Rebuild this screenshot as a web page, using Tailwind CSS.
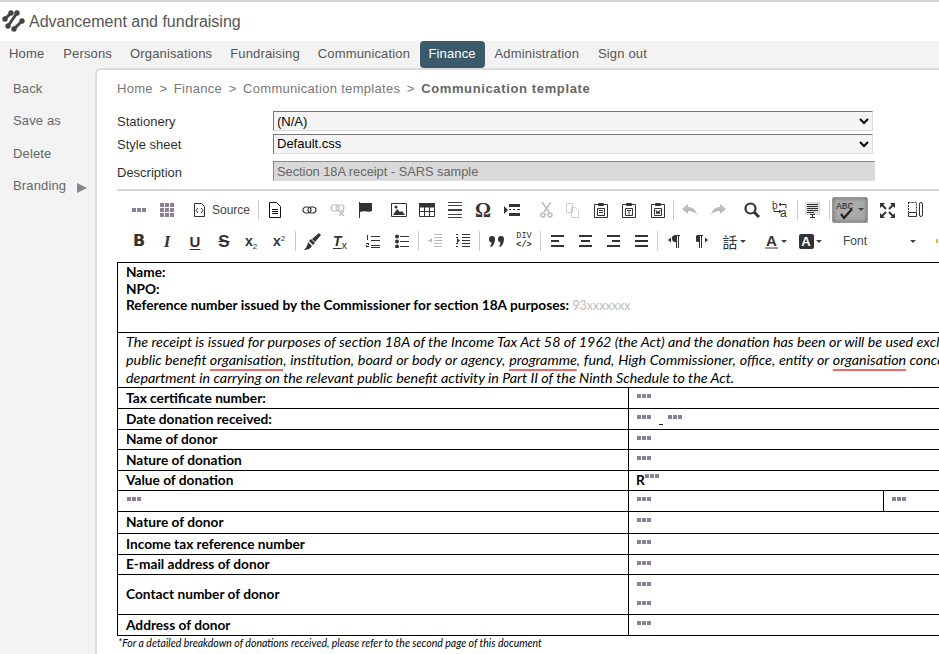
<!DOCTYPE html>
<html><head><meta charset="utf-8"><title>Communication template</title>
<script src="https://cdn.jsdelivr.net/npm/@tailwindcss/browser@4"></script></head>
<body class="overflow-hidden bg-white">
<div class="w-[939px] h-[654px] overflow-hidden font-['Liberation_Sans',Arial,sans-serif] text-[13px] flex flex-col border-t-2 border-[#d2d2d2]">
  <header class="h-[39px] shrink-0 flex items-center pl-[2px] bg-white">
    <svg width="23" height="23" viewBox="0 0 23 23" fill="#444" stroke="#444" stroke-width="3" stroke-linecap="round"><path d="M3 9L9 3M6 16L15 3M12 19L20 11"/><g stroke="none"><circle cx="3" cy="9" r="2.700"/><circle cx="9" cy="3" r="2.700"/><circle cx="6" cy="16" r="2.700"/><circle cx="15" cy="3" r="2.700"/><circle cx="12" cy="19" r="2.700"/><circle cx="20" cy="11" r="2.700"/></g></svg>
    <span class="ml-[4px] text-[16px] text-[#555]">Advancement and fundraising</span>
  </header>
  <nav class="h-[27px] shrink-0 bg-[#f3f3f3] flex text-[#555] tracking-[0.15px]">
    <a class="pl-[9px] pr-[9.500px] leading-[25px]">Home</a>
    <a class="pl-[9.500px] pr-[8.500px] leading-[25px]">Persons</a>
    <a class="pl-[9.500px] pr-[8.500px] leading-[25px]">Organisations</a>
    <a class="pl-[9.500px] pr-[8.500px] leading-[25px]">Fundraising</a>
    <a class="px-[9.500px] leading-[25px]">Communication</a>
    <a class="w-[65px] h-[27px] text-center leading-[25px] bg-[#3a5a6c] text-white rounded-[4px]">Finance</a>
    <a class="px-[10px] leading-[25px]">Administration</a>
    <a class="px-[9px] leading-[25px]">Sign out</a>
  </nav>
  <div class="flex flex-1 min-h-0 bg-[#f3f3f3]">
    <aside class="w-[95px] shrink-0 pl-[13px] pt-[13px] text-[#666] tracking-[0.15px] flex flex-col gap-[16px]">
      <div class="leading-[16px]">Back</div>
      <div class="leading-[16px]">Save as</div>
      <div class="leading-[17px]">Delete</div>
      <div class="leading-[16px] flex items-center">Branding<svg class="ml-[11px] mt-[4px]" width="10" height="10" viewBox="0 0 10 10"><path d="M0 0l10 5-10 5z" fill="#888"/></svg></div>
    </aside>
    <main class="flex-1 min-w-0 bg-white border-l-2 border-t-2 border-[#dcdcdc] rounded-tl-[6px] overflow-hidden pl-[20px]">
      <div class="h-[38px] pt-[11px] leading-[16px] text-[#777] tracking-[0.3px] whitespace-nowrap">Home<span class="mx-[6.500px]">&gt;</span>Finance<span class="mx-[6.500px]">&gt;</span>Communication templates<span class="mx-[6.500px]">&gt;</span><b class="text-[#666] tracking-[0.63px]">Communication template</b></div>
      <div class="flex items-center h-[22px] mt-[2px] text-black/85"><label class="w-[156px] pt-[2px]">Stationery</label>
        <select class="w-[600px] h-[20px] text-[13px] bg-[#f4f4f4] border border-[#767676] border-b-[#ddd] border-r-[#ddd] pl-0 [text-indent:-1px] [appearance:auto] text-black"><option>(N/A)</option></select></div>
      <div class="flex items-center h-[23px] text-black/85"><label class="w-[156px] pt-[3px]">Style sheet</label>
        <select class="w-[600px] h-[20px] text-[13px] bg-[#f4f4f4] border border-[#767676] border-b-[#ddd] border-r-[#ddd] pl-0 [text-indent:-1px] [appearance:auto] text-black"><option>Default.css</option></select></div>
      <div class="flex items-center h-[31px] text-black/85"><label class="w-[156px] pt-[4px]">Description</label>
        <input class="w-[602px] h-[20px] bg-[#d9d9d9] border border-[#8a8a8a] border-b-[#ddd] border-r-[#ddd] px-[3px] text-[12.800px] text-[#666] mt-[1px]" value="Section 18A receipt - SARS sample" disabled></div>
      <div class="border-t-2 border-[#d4d4d4] mt-[3px] h-[73px] flex flex-col whitespace-nowrap">
        <div class="flex items-center h-[34px] pt-[4px] pl-[8px] text-[#333]">
          <span class="w-[28px] flex justify-center"><svg width="14" height="4"><path d="M0 0h4v4H0zM5 0h4v4H5zM10 0h4v4h-4z" fill="#8c7f96"/></svg></span>
          <span class="w-[28px] flex justify-center"><svg width="14" height="14"><path d="M0 0h4v4H0zM5 0h4v4H5zM10 0h4v4h-4zM0 5h4v4H0zM5 5h4v4H5zM10 5h4v4h-4zM0 10h4v4H0zM5 10h4v4H5zM10 10h4v4h-4z" fill="#8c7f96"/></svg></span>
          <span class="w-[78px] flex items-center pl-[12px] text-[12px] text-[#444] border-r border-[#ccc] h-[20px]"><svg class="mr-[6px]" width="13" height="16" fill="none" stroke="#333"><path d="M1.500 1.500h7l3 3v10h-10zM5 6L3 8.500l2 2.500M8 6l2 2.500-2 2.500"/></svg>Source</span>
          <span class="w-[28px] ml-[2px] flex justify-center"><svg width="12" height="16" fill="none" stroke="#111"><path d="M.5.500h7l4 4v11H.5zM3 7.500h6M3 9.500h6M3 11.500h6"/></svg></span>
          <span class="w-[28px] ml-[6px] flex justify-center"><svg width="15" height="8" fill="none" stroke="#333" stroke-width="1.200"><rect x="1" y="1" width="8" height="6" rx="3"/><rect x="6" y="1" width="8" height="6" rx="3"/></svg></span>
          <span class="w-[28px] flex justify-center"><svg width="15" height="12" fill="none" stroke="#bbb" stroke-width="1.200"><rect x="1" y="1" width="8" height="6" rx="3"/><rect x="6" y="1" width="8" height="6" rx="3"/><path d="M9 7l5 5M14 7l-5 5"/></svg></span>
          <span class="w-[28px] flex justify-center"><svg width="14" height="16"><path d="M1 0h1v16H1zM2 1h12v8c-4 2-7-1-12 1z" fill="#333"/></svg></span>
          <span class="w-[28px] ml-[6px] flex justify-center"><svg width="16" height="14"><path d="M.5.500h15v13H.5z" fill="none" stroke="#333"/><path d="M2 12l4-6 3 3 2-1 3 4z" fill="#333"/><circle cx="5" cy="4" r="1.500" fill="#333"/></svg></span>
          <span class="w-[28px] flex justify-center"><svg width="16" height="14"><path d="M.5.500h15v13H.5z" fill="#fff" stroke="#333"/><path d="M0 0h16v4H0zM5.500 4v9M10.500 4v9M0 8.500h16" fill="#333" stroke="#333"/></svg></span>
          <span class="w-[28px] flex justify-center"><svg width="14" height="16"><path d="M0 0h14v1H0zM0 3h14v1H0zM0 7h14v2H0zM0 12h14v1H0zM0 15h14v1H0z" fill="#444"/></svg></span>
          <span class="w-[28px] flex justify-center text-[20px] font-bold text-[#333] leading-none font-['Liberation_Serif',serif]">Ω</span>
          <span class="w-[28px] ml-[1px] flex justify-center"><svg width="16" height="12"><path d="M0 2l4 4-4 4zM5 0h11v3H5zM5 5h2v1H5zM9 5h2v1H9zM13 5h3v1h-3zM5 9h11v3H5z" fill="#333"/></svg></span>
          <span class="w-[28px] ml-[6px] flex justify-center"><svg width="13" height="16" fill="none" stroke="#bbb" stroke-width="1.500"><path d="M2 0l7 10M11 0L4 10"/><circle cx="3" cy="13" r="2"/><circle cx="10" cy="13" r="2"/></svg></span>
          <span class="w-[28px] ml-[-2px] flex justify-center"><svg width="13" height="15" fill="none" stroke="#ccc"><path d="M.5.500h6v9h-6zM5.500 4.500h4l3 3v7h-7z" fill="#fff"/></svg></span>
          <span class="w-[28px] ml-[1px] flex justify-center"><svg width="14" height="16" fill="none" stroke="#333"><path d="M.5 2.500h13v13H.5zM4.500 1.500h5v2h-5zM3.500 6.500h7v7h-7zM5 8.500h4M5 10.500h4"/></svg></span>
          <span class="w-[28px] flex justify-center"><svg width="14" height="16" fill="none" stroke="#333"><path d="M.5 2.500h13v13H.5zM4.500 1.500h5v2h-5zM3.500 6.500h7v7h-7zM5 8.500h4M7 8.500v4"/></svg></span>
          <span class="w-[28px] ml-[1px] flex justify-center"><svg width="14" height="16" fill="none" stroke="#333"><path d="M.5 2.500h13v13H.5zM4.500 1.500h5v2h-5zM3.500 6.500h7v7h-7zM5 8l1 4 1-3 1 3 1-4"/></svg></span>
          <span class="w-[1px] h-[20px] bg-[#ccc] ml-[1px]"></span>
          <span class="w-[28px] ml-[2px] flex justify-center"><svg width="16" height="12"><path d="M6 0v3c5 0 8 3 9 8-2-3-5-4-9-4v3L0 5z" fill="#bbb"/></svg></span>
          <span class="w-[28px] flex justify-center"><svg width="16" height="12"><path d="M10 0v3C5 3 2 6 1 11c2-3 5-4 9-4v3l6-5z" fill="#bbb"/></svg></span>
          <span class="w-[28px] ml-[6px] flex justify-center"><svg width="16" height="16" fill="none" stroke="#333" stroke-width="2.200"><circle cx="6.500" cy="6.500" r="5"/><path d="M10 10l5 5" stroke-width="3"/></svg></span>
          <span class="w-[28px] flex justify-center"><svg width="16" height="18" fill="none" stroke="#333"><text x="0" y="8" font-size="10" font-family="Liberation Sans" fill="#333" stroke="none">b</text><text x="8" y="16" font-size="12" font-family="Liberation Sans" fill="#333" stroke="none">a</text><path d="M9 2l-2 1.500L9 5M7.500 3.500H14V7M7 12l2-1.500L7 9M8.500 10.500H2V8"/></svg></span>
          <span class="w-[1px] h-[20px] bg-[#ccc] ml-[3px]"></span>
          <span class="w-[28px] flex justify-center"><svg width="15" height="16"><path d="M0 0h15v13H0z" fill="#ddd"/><path d="M2 2h11v1H2zM2 4h11v1H2zM2 6h11v1H2zM2 8h11v1H2zM2 10h7v1H2zM5 12h5v1H5zM7 12h1v4H7zM5 15h5v1H5z" fill="#333"/></svg></span>
          <span class="w-[1px] h-[20px] bg-[#ccc] ml-[3px]"></span>
          <span class="w-[36px] h-[26px] ml-[2px] bg-[#aaa] rounded-[2px] border border-[#999] shadow-[inset_0_0_4px_#666] flex items-center justify-center text-[#222]"><svg width="30" height="20" fill="none"><text x="1" y="9" font-size="9.500" font-family="Liberation Mono" fill="#222">ABC</text><path d="M6 14l3 4 8-9" stroke="#222" stroke-width="2.200"/><path d="M23 8h6l-3 3z" fill="#444"/></svg></span>
          <span class="w-[28px] ml-[5px] flex justify-center"><svg width="15" height="15"><path d="M0 0h5L0 5zM15 0v5l-5-5zM0 15v-5l5 5zM15 15h-5l5-5z" fill="#333"/><path d="M2 2l4 4M13 2L9 6M2 13l4-4M13 13L9 9" stroke="#333" stroke-width="2"/></svg></span>
          <span class="w-[28px] flex justify-center"><svg width="15" height="16" fill="none" stroke="#333"><path d="M.5.500h8v9" stroke-dasharray="2 1"/><path d="M.5 0v10" stroke-dasharray="2 1"/><path d="M.5 10.500h8v4h-8z"/><rect x="11.500" y=".5" width="3" height="14" rx="1.500"/></svg></span>
        </div>
        <div class="flex items-center h-[30px] mt-[1px] pl-[8px] text-[#333]">
          <span class="w-[28px] text-center font-bold text-[16px] leading-none font-['DejaVu_Sans',sans-serif]">B</span>
          <span class="w-[28px] text-center font-bold italic text-[17px] leading-none font-['Liberation_Serif',serif]">I</span>
          <span class="w-[28px] text-center font-bold underline underline-offset-[2px] text-[15px] leading-none">U</span>
          <span class="w-[28px] ml-[1px] text-center font-bold line-through text-[17px] leading-none">S</span>
          <span class="w-[28px] ml-[-1px] text-center font-bold text-[14px] leading-none">x<span class="text-[8px] font-normal relative top-[3px]">2</span></span>
          <span class="w-[28px] text-center font-bold text-[14px] leading-none">x<span class="text-[8px] font-normal relative top-[-5px]">2</span></span>
          <span class="w-[1px] h-[20px] bg-[#ccc] ml-[2px]"></span>
          <span class="w-[28px] ml-[2px] flex justify-center"><svg width="17" height="17"><path d="M15 0l2 2-6 7-3-3zM7 6l4 4-2 2-4-4zM4 9l4 4c-2 3-5 4-8 4 2-2 4-5 4-8z" fill="#333"/></svg></span>
          <span class="w-[28px] text-center font-bold italic text-[14px] leading-none"><span class="underline underline-offset-[2px]">T</span><span class="text-[11px] not-italic font-normal relative top-[3px]">x</span></span>
          <span class="w-[28px] ml-[5px] flex justify-center"><svg width="14" height="14"><path d="M5 2h9v1H5zM5 6h9v1H5zM5 11h9v1H5zM5 13h9v1H5zM1 1h1v5H1zM0 9h3v1H0zM2 10h1v1H2zM0 12h3v1H0zM0 11h1v2H0z" fill="#333"/></svg></span>
          <span class="w-[28px] ml-[1px] flex justify-center"><svg width="14" height="14"><path d="M5 2h9v1H5zM5 7h9v1H5zM5 12h9v1H5z" fill="#333"/><circle cx="2" cy="2.500" r="2" fill="#333"/><circle cx="2" cy="7.500" r="2" fill="#333"/><circle cx="2" cy="12.500" r="2" fill="#333"/></svg></span>
          <span class="w-[1px] h-[20px] bg-[#ccc] ml-[2px]"></span>
          <span class="w-[28px] ml-[2px] flex justify-center"><svg width="14" height="14"><path d="M6 0h8v1H6zM6 3h8v1H6zM6 6h8v1H6zM6 9h8v1H6zM6 12h8v1H6zM4 4v5L1 6.500zM0 6h2v1H0z" fill="#bbb"/></svg></span>
          <span class="w-[28px] flex justify-center"><svg width="14" height="14"><path d="M6 0h8v1H6zM6 3h8v1H6zM6 6h8v1H6zM6 9h8v1H6zM6 12h8v1H6zM1 4v5l3-2.500zM0 0h2v1H0zM0 12h2v1H0zM0 3h2v1H0zM0 9h2v1H0z" fill="#333"/></svg></span>
          <span class="w-[1px] h-[20px] bg-[#ccc] ml-[2px]"></span>
          <span class="w-[28px] ml-[2px] flex justify-center"><svg width="15" height="11"><path d="M0 3a3 3 0 1 1 6 0c0 4-2 7-4 8l-1-1c1-1 1.500-2 1.500-3.500A3 3 0 0 1 0 3zM9 3a3 3 0 1 1 6 0c0 4-2 7-4 8l-1-1c1-1 1.500-2 1.500-3.500A3 3 0 0 1 9 3z" fill="#333"/></svg></span>
          <span class="w-[28px] flex flex-col items-center text-[8.500px] leading-[9px] font-['Liberation_Mono'] text-[#333]"><span>DIV</span><span class="font-bold">&lt;/&gt;</span></span>
          <span class="w-[1px] h-[20px] bg-[#ccc] ml-[2px]"></span>
          <span class="w-[28px] ml-[2px] flex justify-center"><svg width="13" height="12"><path d="M0 0h13v2H0zM0 5h8v2H0zM0 10h13v2H0z" fill="#333"/></svg></span>
          <span class="w-[28px] flex justify-center"><svg width="13" height="12"><path d="M0 0h13v2H0zM2 5h9v2H2zM0 10h13v2H0z" fill="#333"/></svg></span>
          <span class="w-[28px] flex justify-center"><svg width="13" height="12"><path d="M0 0h13v2H0zM5 5h8v2H5zM0 10h13v2H0z" fill="#333"/></svg></span>
          <span class="w-[28px] flex justify-center"><svg width="13" height="12"><path d="M0 0h13v2H0zM0 5h13v2H0zM0 10h13v2H0z" fill="#333"/></svg></span>
          <span class="w-[1px] h-[20px] bg-[#ccc] ml-[2px]"></span>
          <span class="w-[28px] ml-[2px] flex justify-center"><svg width="12" height="13"><path d="M0 5l3-2.500v5zM7 0h5v1h-1v12h-1V1H9v12H8V7A3.500 3.500 0 0 1 7 0z" fill="#333"/></svg></span>
          <span class="w-[28px] flex justify-center"><svg width="12" height="13"><path d="M12 5L9 2.500v5zM2 0h5v1H6v12H5V1H4v12H3V7A3.500 3.500 0 0 1 2 0z" fill="#333"/></svg></span>
          <span class="w-[28px] ml-[4px] flex items-center justify-center font-['Noto_Sans_CJK_TC',sans-serif] text-[15px] leading-none">話<svg class="ml-[2px]" width="6" height="3"><path d="M0 0h6L3 3z" fill="#444"/></svg></span>
          <span class="w-[28px] ml-[14px] flex items-center justify-center"><span class="font-bold text-[15px] leading-[13px] px-[1px] border-b-2 border-[#999]">A</span><svg class="ml-[3px]" width="6" height="3"><path d="M0 0h6L3 3z" fill="#444"/></svg></span>
          <span class="w-[28px] ml-[6px] flex items-center justify-center"><span class="w-[15px] h-[15px] bg-[#333] rounded-[2px] text-white font-bold text-[13px] leading-[15px] text-center">A</span><svg class="ml-[2px]" width="6" height="3"><path d="M0 0h6L3 3z" fill="#444"/></svg></span>
          <span class="ml-[19px] text-[12px] text-[#444]">Font</span>
          <svg class="ml-[43px]" width="6" height="3"><path d="M0 0h6L3 3z" fill="#444"/></svg>
          <span class="ml-[20px] w-[2px] h-[4px] bg-[#f5b041]"></span>
        </div>
      </div>
      <table class="ml-0 w-[1130px] table-fixed border-collapse border border-black text-black text-[13.700px] leading-[16.500px] font-['Lato',sans-serif] font-bold whitespace-nowrap">
        <colgroup><col class="w-[511px]"><col class="w-[255px]"><col></colgroup>
        <tbody>
          <tr class="h-[70px]"><td colspan="3" class="border border-black align-top pl-[8px] pt-[1px]">Name:<br>NPO:<br>Reference number issued by the Commissioner for section 18A purposes: <span class="font-normal text-[#bbb] text-[12.500px]">93xxxxxxx</span></td></tr>
          <tr class="h-[55px]"><td colspan="3" class="border border-black pl-[8px] font-normal italic text-[14.300px] leading-[18px]">The receipt is issued for purposes of section 18A of the Income Tax Act 58 of 1962 (the Act) and the donation has been or will be used exclusively<br>public benefit <span class="underline decoration-2 decoration-[#ee6a6a] underline-offset-[4px] [text-decoration-skip-ink:none]">organisation</span><span class="[word-spacing:0.500px]">, institution, board or body or agency, </span><span class="underline decoration-2 decoration-[#ee6a6a] underline-offset-[4px] [text-decoration-skip-ink:none]">programme</span><span class="[word-spacing:0.500px]">, fund, High Commissioner, office, entity or </span><span class="underline decoration-2 decoration-[#ee6a6a] underline-offset-[4px] [text-decoration-skip-ink:none]">organisation</span> concerned<br>department in carrying on the relevant public benefit activity in Part II of the Ninth Schedule to the Act.</td></tr>
          <tr class="h-[21px]"><td class="border border-black pl-[8px]">Tax certificate number:</td><td colspan="2" class="border border-black align-top pl-[8px] pt-[6px]"><svg class="block" width="14" height="4"><path d="M0 0h4v4H0zM5 0h4v4H5zM10 0h4v4h-4z" fill="#8c7f96"/></svg></td></tr>
          <tr class="h-[21px]"><td class="border border-black pl-[8px]">Date donation received:</td><td colspan="2" class="border border-black align-top pl-[8px] pt-[6px]"><span class="flex items-start"><svg class="block" width="14" height="4"><path d="M0 0h4v4H0zM5 0h4v4H5zM10 0h4v4h-4z" fill="#8c7f96"/></svg><span class="w-[4px] h-[1px] bg-[#222] ml-[8px] mt-[9px]"></span><svg class="block ml-[5px]" width="14" height="4"><path d="M0 0h4v4H0zM5 0h4v4H5zM10 0h4v4h-4z" fill="#8c7f96"/></svg></span></td></tr>
          <tr class="h-[20px]"><td class="border border-black pl-[8px]">Name of donor</td><td colspan="2" class="border border-black align-top pl-[8px] pt-[6px]"><svg class="block" width="14" height="4"><path d="M0 0h4v4H0zM5 0h4v4H5zM10 0h4v4h-4z" fill="#8c7f96"/></svg></td></tr>
          <tr class="h-[21px]"><td class="border border-black pl-[8px]">Nature of donation</td><td colspan="2" class="border border-black align-top pl-[8px] pt-[6px]"><svg class="block" width="14" height="4"><path d="M0 0h4v4H0zM5 0h4v4H5zM10 0h4v4h-4z" fill="#8c7f96"/></svg></td></tr>
          <tr class="h-[20px]"><td class="border border-black pl-[8px]">Value of donation</td><td colspan="2" class="border border-black pl-[7px]"><span class="flex items-start">R<svg class="block mt-[2px]" width="14" height="4"><path d="M0 0h4v4H0zM5 0h4v4H5zM10 0h4v4h-4z" fill="#8c7f96"/></svg></span></td></tr>
          <tr class="h-[21px]"><td class="border border-black align-top pl-[9px] pt-[6px]"><svg class="block" width="14" height="4"><path d="M0 0h4v4H0zM5 0h4v4H5zM10 0h4v4h-4z" fill="#8c7f96"/></svg></td><td class="border border-black align-top pl-[8px] pt-[6px]"><svg class="block" width="14" height="4"><path d="M0 0h4v4H0zM5 0h4v4H5zM10 0h4v4h-4z" fill="#8c7f96"/></svg></td><td class="border border-black align-top pl-[8px] pt-[6px]"><svg class="block" width="14" height="4"><path d="M0 0h4v4H0zM5 0h4v4H5zM10 0h4v4h-4z" fill="#8c7f96"/></svg></td></tr>
          <tr class="h-[22px]"><td class="border border-black pl-[8px]">Nature of donor</td><td colspan="2" class="border border-black align-top pl-[8px] pt-[6px]"><svg class="block" width="14" height="4"><path d="M0 0h4v4H0zM5 0h4v4H5zM10 0h4v4h-4z" fill="#8c7f96"/></svg></td></tr>
          <tr class="h-[21px]"><td class="border border-black pl-[8px]">Income tax reference number</td><td colspan="2" class="border border-black align-top pl-[8px] pt-[6px]"><svg class="block" width="14" height="4"><path d="M0 0h4v4H0zM5 0h4v4H5zM10 0h4v4h-4z" fill="#8c7f96"/></svg></td></tr>
          <tr class="h-[20px]"><td class="border border-black pl-[8px]">E-mail address of donor</td><td colspan="2" class="border border-black align-top pl-[8px] pt-[6px]"><svg class="block" width="14" height="4"><path d="M0 0h4v4H0zM5 0h4v4H5zM10 0h4v4h-4z" fill="#8c7f96"/></svg></td></tr>
          <tr class="h-[40px]"><td class="border border-black pl-[8px]">Contact number of donor</td><td colspan="2" class="border border-black align-top pl-[8px] pt-[7px]"><svg class="block" width="14" height="4"><path d="M0 0h4v4H0zM5 0h4v4H5zM10 0h4v4h-4z" fill="#8c7f96"/></svg><svg class="block mt-[15px]" width="14" height="4"><path d="M0 0h4v4H0zM5 0h4v4H5zM10 0h4v4h-4z" fill="#8c7f96"/></svg></td></tr>
          <tr class="h-[21px]"><td class="border border-black pl-[8px]">Address of donor</td><td colspan="2" class="border border-black align-top pl-[8px] pt-[6px]"><svg class="block" width="14" height="4"><path d="M0 0h4v4H0zM5 0h4v4H5zM10 0h4v4h-4z" fill="#8c7f96"/></svg></td></tr>
        </tbody>
      </table>
      <p class="pl-[1px] font-['Lato',sans-serif] italic text-[10.500px] leading-[14px] text-black whitespace-nowrap">*For a detailed breakdown of donations received, please refer to the second page of this document</p>
    </main>
  </div>
</div>
</body></html>
